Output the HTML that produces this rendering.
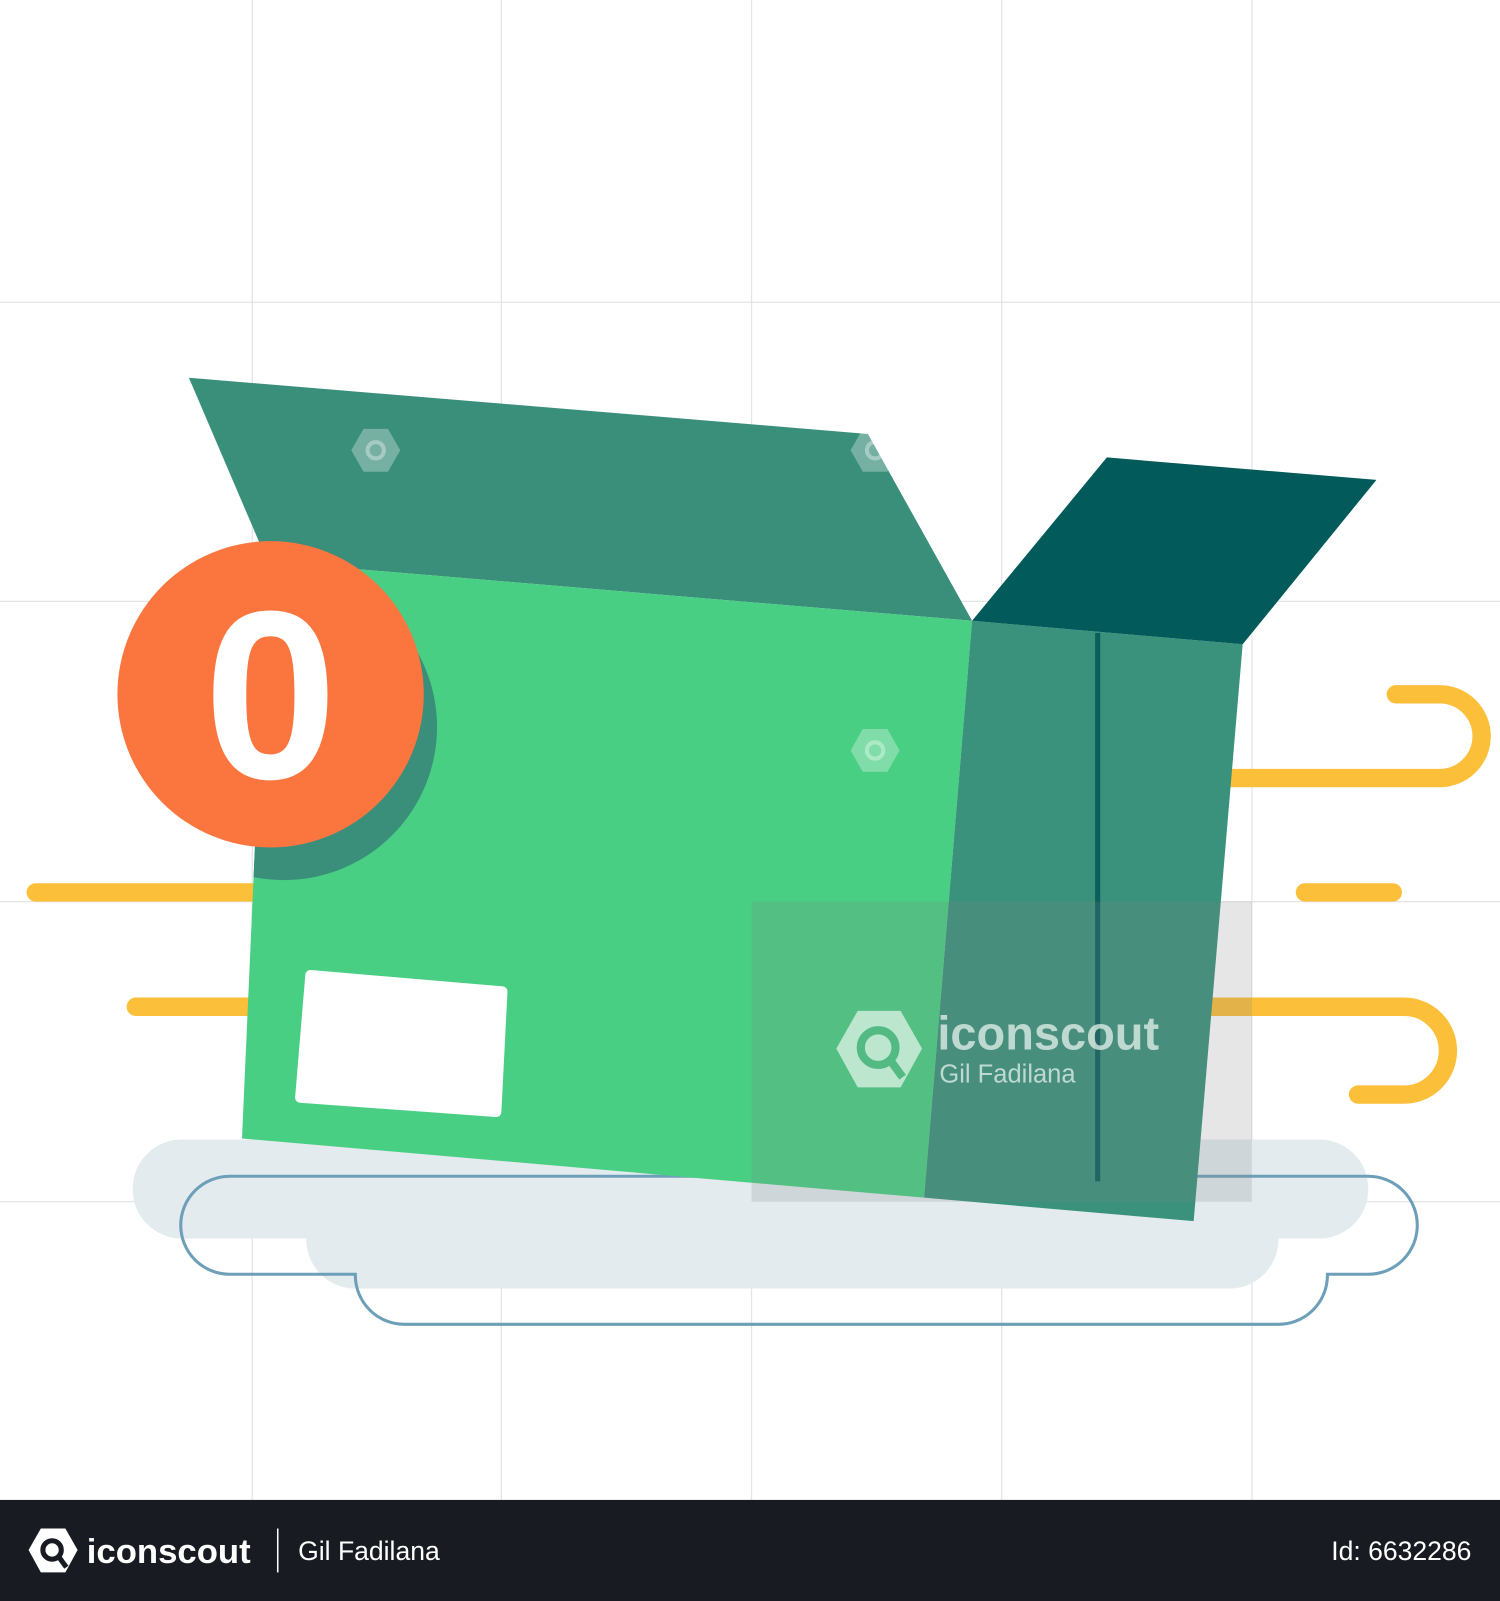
<!DOCTYPE html>
<html><head><style>
html,body{margin:0;padding:0;background:#fff;width:1500px;height:1601px;overflow:hidden}
svg{display:block}
text{font-family:"Liberation Sans",sans-serif}
</style></head><body>
<svg width="1500" height="1601" viewBox="0 0 1469 1568" preserveAspectRatio="none" xmlns="http://www.w3.org/2000/svg">
<defs>
<clipPath id="front"><polygon points="262,550 952,608 905,1173 237,1115"/></clipPath>
<g id="wm">
<polygon points="-12,-21 12,-21 24,0 12,21 -12,21 -24,0" fill="#fff" opacity="0.3"/>
<circle cx="0" cy="0" r="8" fill="none" stroke="#fff" stroke-width="4" opacity="0.35"/>
</g>
</defs>
<rect width="1469" height="1568" fill="#fff"/>
<g stroke="#e2e4e6" stroke-width="1.2">
<line x1="247" y1="0" x2="247" y2="1469"/><line x1="491" y1="0" x2="491" y2="1469"/><line x1="736" y1="0" x2="736" y2="1469"/><line x1="981" y1="0" x2="981" y2="1469"/><line x1="1226" y1="0" x2="1226" y2="1469"/>
<line x1="0" y1="296" x2="1469" y2="296"/><line x1="0" y1="589" x2="1469" y2="589"/><line x1="0" y1="883" x2="1469" y2="883"/><line x1="0" y1="1177" x2="1469" y2="1177"/>
</g>
<rect x="130" y="1116" width="1210" height="97" rx="48" fill="#e3ebef"/>
<rect x="300" y="1160" width="952" height="102" rx="48" fill="#e3ebef"/>
<path d="M348,1248 H225 A48,48 0 0 1 225,1152 H1340 A48,48 0 0 1 1340,1248 H1300 V1250 A48,48 0 0 1 1252,1297 H396 A48,48 0 0 1 348,1250 Z" fill="none" stroke="#6e9fb8" stroke-width="3"/>
<g stroke="#fcbf3a" stroke-width="18" stroke-linecap="round" fill="none">
<line x1="35" y1="874" x2="255" y2="874"/><line x1="133" y1="986" x2="250" y2="986"/><line x1="1278" y1="874" x2="1364" y2="874"/>
<path d="M1200,762 H1410 A41,41 0 0 0 1410,680 H1367"/>
<path d="M1185,986 H1375 A43,43 0 0 1 1375,1072 H1330"/>
</g>
<polygon points="185,370 850,425 952,608 262,550" fill="#3a8f7b"/>
<polygon points="262,550 952,608 905,1173 237,1115" fill="#49cf84"/>
<polygon points="952,608 1217,631 1169,1196 905,1173" fill="#3a927c"/>
<polygon points="952,608 1084,448 1348,470 1217,631" fill="#025a5a"/>
<line x1="1075" y1="620" x2="1075" y2="1157" stroke="#0b5e5a" stroke-width="5"/>
<polygon points="304,955 492,971 486,1089 294,1075" fill="#fff" stroke="#fff" stroke-width="10" stroke-linejoin="round"/>
<g clip-path="url(#front)"><circle cx="278" cy="712" r="150" fill="#3a8f7b"/></g>
<circle cx="265" cy="680" r="150" fill="#fb763f"/>
<text x="265" y="762" text-anchor="middle" font-size="235" font-weight="bold" fill="#fff">0</text>
<use href="#wm" x="368" y="441"/>
<use href="#wm" x="857" y="441"/>
<use href="#wm" x="857" y="735"/>
<rect x="736" y="883" width="490" height="294" fill="#808080" opacity="0.2"/>
<g opacity="0.75">
<polygon points="840,990 882,990 903,1027 882,1065 840,1065 819,1027" fill="#dff3e8"/>
<circle cx="860" cy="1026" r="17" fill="none" stroke="#55b985" stroke-width="8"/>
<line x1="870" y1="1036" x2="884" y2="1055" stroke="#55b985" stroke-width="8"/>
<text x="918" y="1028" font-size="46" font-weight="bold" fill="#e6f2ec">iconscout</text>
<text x="920" y="1060" font-size="25" fill="#e6f2ec">Gil Fadilana</text>
</g>
<rect x="0" y="1469" width="1469" height="99" fill="#181c22"/>
<polygon points="40,1497 64,1497 76,1518 64,1540 40,1540 28,1518" fill="#fff"/>
<circle cx="51" cy="1518" r="9" fill="none" stroke="#181c22" stroke-width="5"/>
<line x1="57" y1="1524" x2="65" y2="1535" stroke="#181c22" stroke-width="5"/>
<text x="85" y="1531" font-size="34" font-weight="bold" fill="#fff">iconscout</text>
<line x1="272" y1="1497" x2="272" y2="1540" stroke="#fff" stroke-width="1.5"/>
<text x="292" y="1528" font-size="26" fill="#fff">Gil Fadilana</text>
<text x="1441" y="1528" font-size="26" fill="#fff" text-anchor="end">Id: 6632286</text>
</svg>
</body></html>
